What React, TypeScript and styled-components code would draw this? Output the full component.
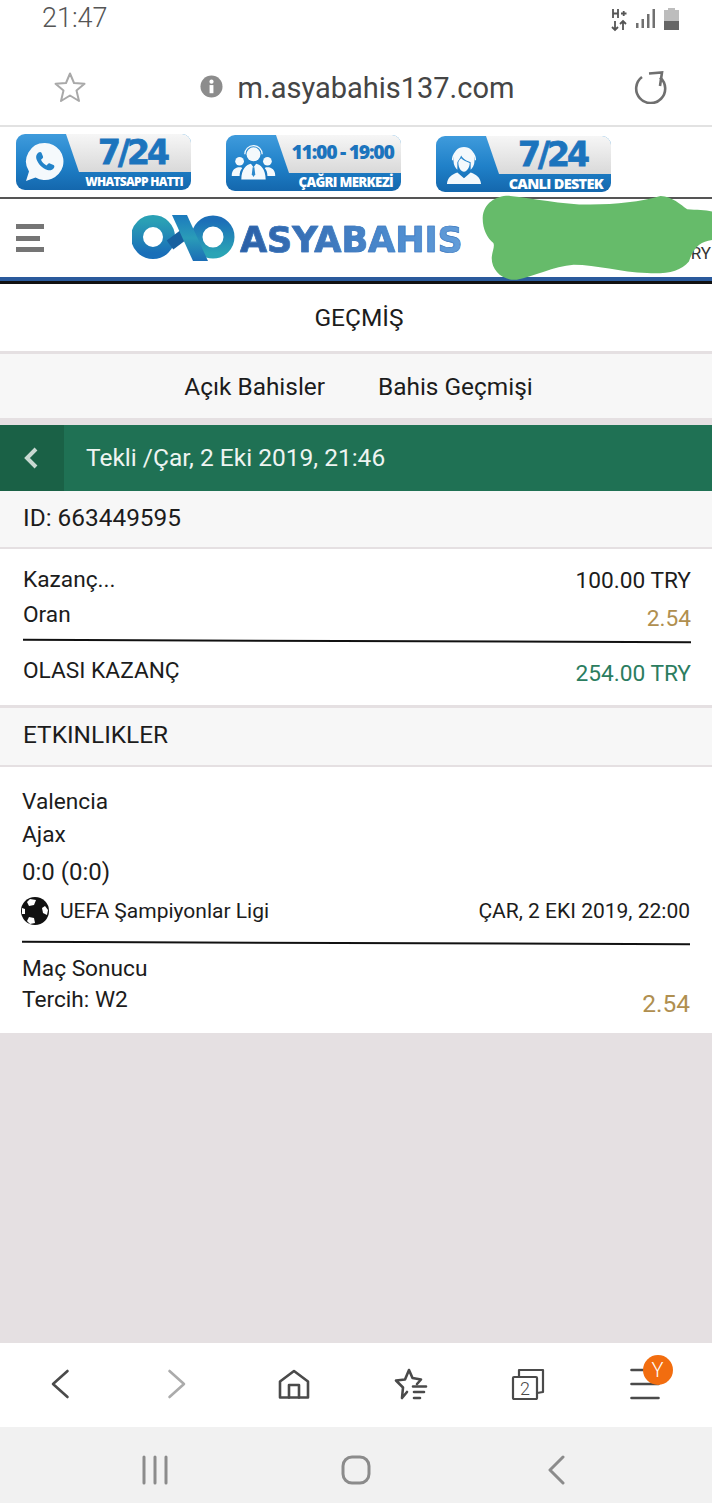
import React from 'react';
import styled, { createGlobalStyle } from 'styled-components';

const GlobalStyle = createGlobalStyle`
html, body {
  margin: 0;
  padding: 0;
  background: #fff;
}
body {
  font-family: Roboto, "Liberation Sans", sans-serif;
  color: #1c1c1c;
}
`;

const Page = styled.div`
  width: 712px;
  height: 1503px;
  display: flex;
  flex-direction: column;
  overflow: hidden;
  background: #e5e0e2;
`;

const StatusBar = styled.div`
  height: 48px;
  flex: none;
  background: #fff;
  display: flex;
  justify-content: space-between;
  padding: 4px 33px 0 42px;
  box-sizing: border-box;
`;

const Clock = styled.span`
  font-size: 27px;
  font-weight: 300;
  line-height: 28px;
  color: #555;
`;

const StatusIcons = styled.div`
  display: flex;
  gap: 9px;
  height: 26px;
  margin-top: 4px;
`;

const UrlBar = styled.div`
  height: 79px;
  flex: none;
  background: #fff;
  border-bottom: 2px solid #e2e2e2;
  box-sizing: border-box;
  display: flex;
  align-items: center;
  justify-content: space-between;
  padding: 0 45px 0 54px;
`;

const UrlGroup = styled.div`
  display: flex;
  align-items: center;
  gap: 15px;
  margin-right: 5px;
`;

const UrlText = styled.span`
  font-size: 29px;
  color: #454545;
  padding-top: 2px;
`;

const PromoStrip = styled.div`
  height: 72px;
  flex: none;
  background: #fff;
  border-bottom: 2px solid #555;
  box-sizing: border-box;
  display: flex;
  align-items: flex-start;
  gap: 35px;
  padding: 6px 0 0 16px;
`;

const Banner = styled.div<{ $drop: number }>`
  width: 175px;
  height: 56px;
  margin-top: ${(p) => p.$drop}px;
  border-radius: 9px;
  background: linear-gradient(180deg, #3f9bdc 0%, #1f80c8 55%, #1467ad 100%);
  display: grid;
  grid-template-columns: 50px 1fr;
  overflow: hidden;
`;

const BannerIcon = styled.div`
  display: flex;
  align-items: center;
  justify-content: center;
  color: #fff;
  padding-left: 5px;
`;

const BannerBody = styled.div`
  display: flex;
  flex-direction: column;
`;

const BannerTop = styled.div`
  height: 38px;
  background: linear-gradient(180deg, #f6f6f6 0%, #d9d9d9 100%);
  clip-path: polygon(0 0, 100% 0, 100% 100%, 13px 100%);
  display: flex;
  align-items: center;
  justify-content: center;
  padding-left: 8px;
  color: #1c74bd;
  font-family: "DejaVu Sans", sans-serif;
  font-weight: 700;
`;

const BigHours = styled.span`
  font-size: 33px;
  letter-spacing: -3px;
  -webkit-text-stroke: 0.8px #1c74bd;
  transform: translateY(-1px);
`;

const SmallHours = styled.span`
  font-size: 19.5px;
  letter-spacing: -1.3px;
  font-family: "Open Sans", sans-serif;
  font-weight: 800;
  white-space: nowrap;
  transform: translateY(-3px);
`;

const BannerLabel = styled.div<{ $size: number }>`
  flex: 1;
  display: flex;
  align-items: center;
  justify-content: flex-end;
  padding-right: 8px;
  color: #fff;
  font-family: "Open Sans", sans-serif;
  font-weight: 800;
  font-size: ${(p) => p.$size}px;
  letter-spacing: -0.7px;
  white-space: nowrap;
`;

const Header = styled.div`
  position: relative;
  height: 85px;
  flex: none;
  background: #fff;
  box-sizing: border-box;
  border-bottom: 3px solid #111;
  box-shadow: inset 0 -4px 0 #2a5a9c;
  display: flex;
  align-items: flex-start;
  padding: 25px 0 0 16px;
`;

const Burger = styled.div`
  width: 28px;
  height: 28px;
  display: flex;
  flex-direction: column;
  justify-content: space-between;
`;

const BurgerBar = styled.span<{ $short?: boolean }>`
  height: 5px;
  width: ${(p) => (p.$short ? 24 : 28)}px;
  background: #757575;
`;

const Logo = styled.div`
  display: flex;
  align-items: center;
  margin-left: 88px;
  margin-top: -9px;
  gap: 5px;
`;

const LogoWord = styled.span`
  font-family: "DejaVu Sans", sans-serif;
  font-weight: 700;
  font-size: 35px;
  padding-top: 4px;
  -webkit-text-stroke: 0.7px rgba(60, 120, 190, 0.9);
  background: linear-gradient(90deg, #2a5fa6 0%, #4d8ccf 70%, #639dd9 100%);
  -webkit-background-clip: text;
  background-clip: text;
  color: transparent;
`;

const Balance = styled.span`
  position: absolute;
  right: 1px;
  top: 44px;
  font-size: 17px;
  color: #333;
`;

const Scribble = styled.svg`
  position: absolute;
  left: 480px;
  top: -8px;
  width: 234px;
  height: 94px;
`;

const TitleRow = styled.div`
  height: 67px;
  flex: none;
  background: #fff;
  border-bottom: 3px solid #e5e0e2;
  display: flex;
  align-items: center;
  justify-content: center;
  padding-left: 6px;
  font-size: 24.5px;
`;

const TabsRow = styled.div`
  height: 64px;
  flex: none;
  background: #f7f7f7;
  border-bottom: 7px solid #e5e0e2;
  display: flex;
  align-items: center;
  justify-content: center;
  gap: 53px;
  padding-left: 5px;
  font-size: 24.4px;
`;

const GreenBar = styled.div`
  height: 66px;
  flex: none;
  background: #1f7154;
  display: flex;
  align-items: stretch;
  color: #eef4f1;
  font-size: 24.5px;
`;

const BackCell = styled.div`
  width: 64px;
  background: #1a6146;
  display: flex;
  align-items: center;
  justify-content: center;
  padding-right: 3px;
  box-sizing: border-box;
`;

const GreenTitle = styled.div`
  display: flex;
  align-items: center;
  padding: 0 0 2px 22px;
`;

const GreyRow = styled.div<{ $height: number; $capped?: boolean }>`
  height: ${(p) => p.$height}px;
  flex: none;
  box-sizing: border-box;
  background: #f7f7f7;
  border-top: ${(p) => (p.$capped ? '3px solid #e5e0e2' : 'none')};
  border-bottom: 2px solid #e5e0e2;
  display: flex;
  align-items: center;
  padding: 0 0 ${(p) => (p.$capped ? 5 : 4)}px 23px;
  font-size: 24.4px;
`;

const Section = styled.div<{ $height: number; $top: number; $left: number; $right: number }>`
  height: ${(p) => p.$height}px;
  flex: none;
  box-sizing: border-box;
  background: #fff;
  padding: ${(p) => p.$top}px ${(p) => p.$right}px 0 ${(p) => p.$left}px;
  display: flex;
  flex-direction: column;
`;

const Row = styled.div<{ $height?: number }>`
  height: ${(p) => p.$height ?? 34}px;
  display: flex;
  align-items: center;
  justify-content: space-between;
  font-size: 22.7px;
  white-space: nowrap;
`;

const Value = styled.span<{ $tone?: string; $drop?: number; $size?: number }>`
  font-size: ${(p) => p.$size ?? 22.7}px;
  color: ${(p) => p.$tone ?? '#1c1c1c'};
  padding-top: ${(p) => p.$drop ?? 0}px;
`;

const Score = styled.span`
  font-size: 24px;
`;

const Rule = styled.div<{ $above: number; $below: number }>`
  height: 2px;
  background: #111;
  margin: ${(p) => p.$above}px 0 ${(p) => p.$below}px;
  transform: rotate(0.2deg);
`;

const League = styled.div`
  display: flex;
  align-items: center;
  gap: 11px;
  margin-left: -1px;
  font-size: 21px;
`;

const EventDate = styled.span`
  font-size: 21px;
`;

const Filler = styled.div`
  flex: 1;
  background: #e5e0e2;
`;

const BrowserNav = styled.div`
  height: 84px;
  flex: none;
  box-sizing: border-box;
  background: #fff;
  display: grid;
  grid-template-columns: repeat(6, 117px);
  padding: 0 0 2px 1px;
  align-items: center;
  justify-items: center;
`;

const NavItem = styled.div`
  position: relative;
  display: flex;
`;

const Badge = styled.span`
  position: absolute;
  right: -13px;
  top: -13px;
  width: 30px;
  height: 30px;
  border-radius: 50%;
  background: #f26d0f;
  color: #fff;
  font-size: 20px;
  font-weight: 300;
  display: flex;
  align-items: center;
  justify-content: center;
`;

const SystemNav = styled.div`
  height: 76px;
  flex: none;
  background: #f1f1f1;
  display: flex;
  justify-content: center;
  align-items: center;
`;

const SystemItem = styled.div`
  width: 201px;
  display: flex;
  justify-content: center;
  padding-top: 9px;
`;

function InfinityLogo() {
  return (
    <svg width="103" height="46" viewBox="0 0 103 46">
      <defs>
        <linearGradient id="ringLeft" x1="0" y1="0" x2="0" y2="1">
          <stop offset="0" stopColor="#2aa0b5" />
          <stop offset="1" stopColor="#1a6fb8" />
        </linearGradient>
        <linearGradient id="ringRight" x1="0" y1="0" x2="0" y2="1">
          <stop offset="0" stopColor="#1c6fb8" />
          <stop offset="1" stopColor="#2aa4b5" />
        </linearGradient>
        <linearGradient id="band" x1="0" y1="0" x2="0" y2="1">
          <stop offset="0" stopColor="#1c7abd" />
          <stop offset="0.5" stopColor="#2a9cb8" />
          <stop offset="1" stopColor="#1b6db5" />
        </linearGradient>
      </defs>
      <circle cx="21" cy="22" r="16" fill="none" stroke="url(#ringLeft)" strokeWidth="12" />
      <circle cx="81" cy="22" r="16" fill="none" stroke="url(#ringRight)" strokeWidth="11" />
      <path d="M38 30 58 15" stroke="#17609f" strokeWidth="11" />
      <path d="M40 0h15l21 46H61z" fill="url(#band)" />
    </svg>
  );
}

function WhatsappBubble() {
  return (
    <svg width="40" height="40" viewBox="0 0 40 40">
      <path
        fill="#f5f9fc"
        d="M21 1a18.500 18.500 0 1 1-9.500 34.400L2 39l3-9.500A18.500 18.500 0 0 1 21 1z"
      />
      <path
        fill="#2383c9"
        d="M14.500 10.500c1-.8 2.500-.8 3 .3l1.500 3.700c.3.800 0 1.500-.6 2l-1.400 1.300c1 2.500 3 4.500 5.500 5.600l1.400-1.500c.5-.6 1.300-.8 2-.5l3.600 1.600c1 .5 1.200 1.800.4 2.900-1.500 2.300-4 3-6.500 2-5.300-2-9.300-6-11-11-.8-2.500.2-4.800 2.100-6.400z"
      />
    </svg>
  );
}

function CallCenterIcon() {
  return (
    <svg width="50" height="40" viewBox="0 0 50 46" fill="#f4f9fc">
      <circle cx="25" cy="13" r="8" />
      <path d="M15 13a10 10 0 0 1 20 0" fill="none" stroke="#f4f9fc" strokeWidth="1.500" />
      <path d="M11 42c0-12 6-17 11-18l3 4 3-4c5 1 11 6 11 18z" />
      <circle cx="9" cy="21" r="5" />
      <circle cx="41" cy="21" r="5" />
      <path d="M0 38c0-7 4-10 9-10 1 0 2 0 3 1-2 2-3 5-3 9z" />
      <path d="M50 38c0-7-4-10-9-10-1 0-2 0-3 1 2 2 3 5 3 9z" />
      <path d="M24 28h2l1 8-2 3-2-3z" fill="#2d8acd" />
    </svg>
  );
}

function SupportIcon() {
  return (
    <svg width="38" height="40" viewBox="0 0 40 42" fill="#f4f9fc">
      <path d="M9 17C8 6 14 2 20 2s12 4 11 15c0 4-2 7-4 9v-8c-3-1-8-3-10-7-1 3-3 5-4 7v8c-2-2-4-5-4-9z" />
      <path d="M14 18c1-2 2-3 3-4 2 2 6 4 9 5 0 5-3 9-6 9s-6-4-6-10z" />
      <path d="M2 41c1-7 5-10 11-12l7 6 7-6c6 2 10 5 11 12z" />
      <path d="M8 16a12 12 0 0 1 24 0" fill="none" stroke="#f4f9fc" strokeWidth="1.500" />
    </svg>
  );
}

function SoccerBall() {
  return (
    <svg width="28" height="28" viewBox="0 0 28 28">
      <circle cx="14" cy="14" r="14" fill="#111" />
      <path d="M9 2 15 3 13 8 8 9 6 5z" fill="#fff" />
      <path d="M24 9 27 13 26 18 22 16 21 11z" fill="#fff" />
      <path d="M8 20 13 21 14 26 9 27 6 24z" fill="#fff" />
      <path d="M1 11 4 12 4 17 1 17z" fill="#fff" />
    </svg>
  );
}

function Icon({ w, h, stroke, width = 2.6, children }: { w: number; h: number; stroke: string; width?: number; children: React.ReactNode }) {
  return (
    <svg width={w} height={h} viewBox={`0 0 ${w} ${h}`} fill="none" stroke={stroke} strokeWidth={width} strokeLinecap="round" strokeLinejoin="round">
      {children}
    </svg>
  );
}

export default function App() {
  return (
    <Page>
      <GlobalStyle />
      <StatusBar>
        <Clock>21:47</Clock>
        <StatusIcons>
          <svg width="16" height="24" viewBox="0 0 16 24" stroke="#555" strokeWidth="1.800" fill="none">
            <path d="M2 1v9M7 1v9M2 5.500h5M10 5.500h5.500M12.700 3v5" />
            <path d="M4 13v9M1 19l3 3 3-3M12 22v-9M9 16l3-3 3 3" />
          </svg>
          <svg width="19" height="24" viewBox="0 0 19 24" fill="#707070">
            <rect x="0" y="15" width="2.500" height="5" />
            <rect x="5.500" y="11" width="2.500" height="9" />
            <rect x="11" y="6" width="2.500" height="14" />
            <rect x="16.500" y="1" width="2.500" height="19" />
          </svg>
          <svg width="15" height="24" viewBox="0 0 15 24">
            <rect x="4" y="0" width="7" height="3" fill="#bdbdbd" />
            <rect x="0" y="2" width="15" height="11" fill="#bdbdbd" />
            <rect x="0" y="13" width="15" height="9" fill="#666" />
          </svg>
        </StatusIcons>
      </StatusBar>

      <UrlBar>
        <svg width="32" height="32" viewBox="0 0 32 32" fill="none" stroke="#a9a9a9" strokeWidth="2" strokeLinejoin="round">
          <path d="M16 2.500 20 12 30.500 12.800 22.500 19.500 25 30 16 24.500 7 30 9.500 19.500 1.500 12.800 12 12z" />
        </svg>
        <UrlGroup>
          <svg width="23" height="23" viewBox="0 0 24 24">
            <circle cx="12" cy="12" r="11.500" fill="#8c8c8c" />
            <rect x="10" y="10.500" width="4" height="8.500" fill="#fff" />
            <circle cx="12" cy="7" r="2.200" fill="#fff" />
          </svg>
          <UrlText>m.asyabahis137.com</UrlText>
        </UrlGroup>
        <svg width="34" height="34" viewBox="0 0 34 34" fill="none" stroke="#6f6f6f" strokeWidth="2.600">
          <path d="M9 7A14.500 14.500 0 1 0 27 7.500" />
          <path d="M16 3.500 29 2.500 27 16" strokeLinejoin="miter" />
        </svg>
      </UrlBar>

      <PromoStrip>
        <Banner $drop={1}>
          <BannerIcon><WhatsappBubble /></BannerIcon>
          <BannerBody>
            <BannerTop><BigHours>7/24</BigHours></BannerTop>
            <BannerLabel $size={12}>WHATSAPP HATTI</BannerLabel>
          </BannerBody>
        </Banner>
        <Banner $drop={2}>
          <BannerIcon><CallCenterIcon /></BannerIcon>
          <BannerBody>
            <BannerTop><SmallHours>11:00 - 19:00</SmallHours></BannerTop>
            <BannerLabel $size={13.3}>ÇAĞRI MERKEZİ</BannerLabel>
          </BannerBody>
        </Banner>
        <Banner $drop={3}>
          <BannerIcon><SupportIcon /></BannerIcon>
          <BannerBody>
            <BannerTop><BigHours>7/24</BigHours></BannerTop>
            <BannerLabel $size={14.5}>CANLI DESTEK</BannerLabel>
          </BannerBody>
        </Banner>
      </PromoStrip>

      <Header>
        <Burger>
          <BurgerBar />
          <BurgerBar $short />
          <BurgerBar />
        </Burger>
        <Logo>
          <InfinityLogo />
          <LogoWord>ASYABAHIS</LogoWord>
        </Logo>
        <Balance>TRY</Balance>
        <Scribble viewBox="240 200 700 280">
          <path
            fill="#66bb6a"
            d="M248 280C250 235 290 212 330 214C400 220 480 240 570 240C650 238 720 232 780 214C815 215 840 240 860 254C890 256 920 256 940 262V345C900 350 880 365 865 410C840 440 800 448 740 445C660 442 590 420 520 420C460 425 400 455 350 465C310 468 275 440 275 400C276 380 285 365 280 355C262 340 248 315 248 280Z"
          />
        </Scribble>
      </Header>

      <TitleRow>GEÇMİŞ</TitleRow>

      <TabsRow>
        <span>Açık Bahisler</span>
        <span>Bahis Geçmişi</span>
      </TabsRow>

      <GreenBar>
        <BackCell>
          <svg width="16" height="24" viewBox="0 0 16 24" fill="none" stroke="#c9d9d2" strokeWidth="4">
            <path d="M13 3 4 12l9 9" />
          </svg>
        </BackCell>
        <GreenTitle>Tekli /Çar, 2 Eki 2019, 21:46</GreenTitle>
      </GreenBar>

      <GreyRow $height={58}>ID: 663449595</GreyRow>

      <Section $height={156} $top={12} $left={23} $right={21}>
        <Row $height={36}>
          <span>Kazanç...</span>
          <Value $drop={2}>100.00 TRY</Value>
        </Row>
        <Row>
          <span>Oran</span>
          <Value $tone="#b08f4f" $drop={8}>2.54</Value>
        </Row>
        <Rule $above={9} $below={11} />
        <Row>
          <span>OLASI KAZANÇ</span>
          <Value $tone="#2b7d5f" $drop={6}>254.00 TRY</Value>
        </Row>
      </Section>

      <GreyRow $height={62} $capped>ETKINLIKLER</GreyRow>

      <Section $height={266} $top={17} $left={22} $right={22}>
        <Row>Valencia</Row>
        <Row $height={33}>Ajax</Row>
        <Row $height={42}><Score>0:0 (0:0)</Score></Row>
        <Row $height={36}>
          <League>
            <SoccerBall />
            <span>UEFA Şampiyonlar Ligi</span>
          </League>
          <EventDate>ÇAR, 2 EKI 2019, 22:00</EventDate>
        </Row>
        <Rule $above={13} $below={9} />
        <Row $height={31}>Maç Sonucu</Row>
        <Row $height={31}>
          <span>Tercih: W2</span>
          <Value $tone="#b08f4f" $drop={8} $size={24.5}>2.54</Value>
        </Row>
      </Section>

      <Filler />

      <BrowserNav>
        <NavItem>
          <Icon w={20} h={30} stroke="#4a4a4a"><path d="M17.500 2 3 15l14.500 13" /></Icon>
        </NavItem>
        <NavItem>
          <Icon w={20} h={30} stroke="#ababab"><path d="M2.500 2 17 15 2.500 28" /></Icon>
        </NavItem>
        <NavItem>
          <Icon w={32} h={30} stroke="#4a4a4a">
            <path d="M2 28.500V12.500L16 2l14 10.500v16z" />
            <path d="M11 28.500V16h10v12.500" />
          </Icon>
        </NavItem>
        <NavItem>
          <Icon w={34} h={32} stroke="#4a4a4a">
            <path d="M15 2 18.500 10 27 11.500 23 16M13 24l-5 6 1-10.500-7-7 9-1L15 2" />
            <path d="M19 18.500h13M20 24h10M20 30h6" />
          </Icon>
        </NavItem>
        <NavItem>
          <Icon w={34} h={32} stroke="#4a4a4a" width={2.2}>
            <rect x="2" y="9" width="24" height="22" rx="1" />
            <path d="M8 9V2h24v22l-6 1" />
            <text x="14" y="27" textAnchor="middle" fontSize="18" fontFamily="Roboto" fontWeight="300" fill="#4a4a4a" stroke="none">2</text>
          </Icon>
        </NavItem>
        <NavItem>
          <Icon w={30} h={32} stroke="#4a4a4a">
            <path d="M1.500 2h27M1.500 16h27M1.500 30h27" />
          </Icon>
          <Badge>Y</Badge>
        </NavItem>
      </BrowserNav>

      <SystemNav>
        <SystemItem>
          <Icon w={28} h={30} stroke="#8b8b8b" width={3}>
            <path d="M3 2v26M14 2v26M25 2v26" />
          </Icon>
        </SystemItem>
        <SystemItem>
          <Icon w={30} h={30} stroke="#8b8b8b" width={3}>
            <rect x="2" y="2" width="26" height="26" rx="9" />
          </Icon>
        </SystemItem>
        <SystemItem>
          <Icon w={20} h={30} stroke="#8b8b8b" width={3}>
            <path d="M16 2 3 15l13 13" />
          </Icon>
        </SystemItem>
      </SystemNav>
    </Page>
  );
}
